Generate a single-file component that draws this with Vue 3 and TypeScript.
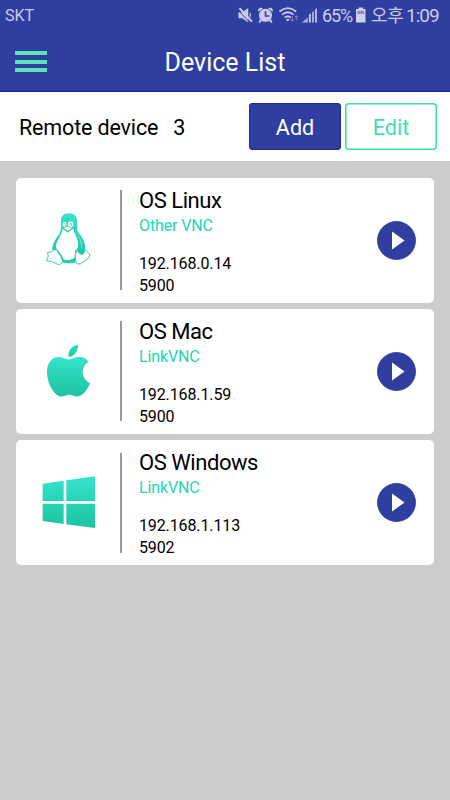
<script setup lang="ts">
interface Device {
  name: string
  kind: string
  ip: string
  port: number
  icon: 'linux' | 'mac' | 'windows'
}

const devices: Device[] = [
  { name: 'OS Linux', kind: 'Other VNC', ip: '192.168.0.14', port: 5900, icon: 'linux' },
  { name: 'OS Mac', kind: 'LinkVNC', ip: '192.168.1.59', port: 5900, icon: 'mac' },
  { name: 'OS Windows', kind: 'LinkVNC', ip: '192.168.1.113', port: 5902, icon: 'windows' },
]
</script>

<template>
  <div class="screen">
    <header class="header">
      <div class="status">
        <span class="carrier">SKT</span>
        <svg class="status-icons" width="82" height="32" viewBox="0 0 82 32">
          <g fill="#c9cbea">
            <path d="M.5 12.300h3.700l6-4.300v14.600l-6-4.300H.5z" />
            <path d="M11.600 12a4.200 4.200 0 0 1 0 6.200z" />
            <path d="M0 10 12 22.800" stroke="#303f9f" stroke-width="1" />
            <path d="M1.500 8.300 14 21.600" stroke="#c9cbea" stroke-width="2" />
            <circle cx="27.500" cy="15.300" r="6.500" />
            <path d="m20.500 11.800-.5-2.400 2.200-1.900 3 .8zM34.500 11.800l.5-2.400-2.200-1.900-3 .8zM22 19l2 2-2 1.700h-1.500zM33 19l-2 2 2 1.700h1.500z" />
            <path d="M63.800 22.500h6v-5z" opacity=".8" />
            <path d="M70.900 22.500h1.900v-9.200l-1.900 1.500zM74.200 22.500h1.500V11l-1.500 1.300zM77.100 22.500h1.700V8l-1.700 1.500z" />
          </g>
          <path d="M27.500 11.300v4.700h4" fill="none" stroke="#303f9f" stroke-width="1.600" />
          <path d="M41.500 11.500q8.300-6.700 16.600 0M44 14.600q5.800-4.700 11.600 0M46.700 17.500q3.100-2.400 6.200 0" fill="none" stroke="#c9cbea" stroke-width="1.700" />
          <path d="m49.800 21.500-1.800-2q1.800-1.400 3.600 0z" fill="#c9cbea" />
          <path d="M54.300 16.500v4.600m-1.700-1.700 1.700 1.800 1.700-1.800M58.400 20v-4.300m-1.700 1.700 1.700-1.800 1.700 1.800" fill="none" stroke="#7f88c5" />
        </svg>
        <span class="percent">65%</span>
        <svg class="battery" width="12" height="32" viewBox="0 0 12 32">
          <path d="M3.500 7.500h4.500v1.500h2.500v13.500H1V9h2.500z" fill="#d0d2ed" />
          <path d="M2.200 10.800h7v3.200h-7z" fill="#8790c9" />
        </svg>
        <span class="ampm">오후</span>
        <span class="clock">1:09</span>
      </div>
      <div class="titlebar">
        <button class="menu" aria-label="Menu"><i></i><i></i><i></i></button>
        <h1>Device List</h1>
      </div>
    </header>

    <section class="toolbar">
      <span class="label">Remote device</span>
      <span class="count">{{ devices.length }}</span>
      <button class="btn add">Add</button>
      <button class="btn edit">Edit</button>
    </section>

    <main class="list">
      <article v-for="d in devices" :key="d.name" class="card">
        <svg class="os" width="104" height="125" viewBox="0 0 104 125">
          <defs>
            <linearGradient :id="'grad-' + d.icon" x1="0" y1="0" x2="0" y2="1">
              <stop offset="0" stop-color="#35e4cd" />
              <stop offset="1" stop-color="#1cc39f" />
            </linearGradient>
          </defs>
          <g v-if="d.icon === 'linux'" transform="translate(19 22) scale(.33333)">
            <path d="M101 40C86 40 77 49 78 65C79 84 78 94 70 106C60 120 52 133 52 149L64 153L83 180Q101 186 120 178L122 158Q129 168 145 162C155 148 151 120 133 102C124 92 127 81 126 62C125 47 116 40 101 40Z" fill="url(#grad-linux)" />
            <path d="M83 87C82 103 67 116 63 137Q61 147 71 153Q81 165 85 178Q101 183 118 175L121 151Q131 148 129 128C127 111 118 103 114 86L99 98Z" fill="#fff" />
            <path d="M55 151Q50 157 37 158L40 168L35 182Q54 184 68 193Q80 195 84 183Q75 160 63 148ZM124 153Q119 166 122 185Q126 195 136 192L162 173L165 165L158 157L151 149L145 162Q133 166 130 153Z" fill="#fff" stroke="#34cfb5" stroke-width="3" />
            <path d="M62 149Q74 158 85 180Q104 185 121 175V188Q101 192 84 188Q80 169 62 149Z" fill="#25cbb0" />
            <ellipse cx="89" cy="73" rx="6" ry="8" fill="#fff" />
            <ellipse cx="107" cy="73" rx="8" ry="9" fill="#fff" />
            <path d="M83 84Q98 75 113 84L99 94Z" fill="#fff" stroke="#25cbb0" stroke-width="2" />
            <path d="m88 71 3 0 0 7M104 72l5-1 1 6" fill="none" stroke="#25cbb0" stroke-width="2.500" />
            <path d="M121 98Q140 114 140 145" fill="none" stroke="#fff" stroke-width="2" opacity=".5" />
          </g>
          <g v-else-if="d.icon === 'mac'" transform="translate(19 25.75) scale(.33333)" fill="url(#grad-mac)">
            <path d="M101 66C98 46 111 33 129 29C131 48 117 65 101 66Z" />
            <path d="M161 82C154 71 143 67 130 67C119 67 111 74 101 74C91 74 83 67 71 67C50 67 36 86 36 110C36 144 55 180 76 185C85 187 92 180 103 180C114 180 119 187 130 185C147 181 159 162 165 145C138 133 136 96 161 82Z" />
          </g>
          <path v-else transform="translate(19 25) scale(.33333)" fill="url(#grad-windows)" d="M23 56 86 47V108H23ZM94 46 180 34V108H94ZM23 116H86V177L23 168ZM94 116H180V189L94 178Z" />
        </svg>
        <div class="rule"></div>
        <div class="info">
          <h2>{{ d.name }}</h2>
          <p class="kind">{{ d.kind }}</p>
          <p>{{ d.ip }}</p>
          <p>{{ d.port }}</p>
        </div>
        <button class="play" aria-label="Connect">
          <svg width="39" height="39" viewBox="0 0 39 39">
            <circle cx="19.500" cy="19.500" r="19" fill="#303f9f" stroke="#2233a0" stroke-width=".8" />
            <path d="M15 10.500 27.500 19.500 15 28.500Z" fill="#fff" />
          </svg>
        </button>
      </article>
    </main>
  </div>
</template>

<style>
body {
  margin: 0;
}
</style>

<style scoped>
.screen {
  width: 450px;
  height: 800px;
  overflow: hidden;
  background: #ccc;
  color: #000;
  font-family: Roboto, "Noto Sans CJK KR", sans-serif;
}
button {
  padding: 0;
  border: 0;
  background: none;
  font: inherit;
}
h1,
h2,
p {
  margin: 0;
  font-weight: 400;
  white-space: nowrap;
}
.header {
  box-sizing: border-box;
  height: 92px;
  background: #303f9f;
  border-bottom: 1px solid #10239a;
}
.status {
  display: flex;
  height: 32px;
  line-height: 32px;
  color: #c9cbea;
  white-space: nowrap;
}
.carrier {
  width: 233px;
  padding-left: 5px;
  font-size: 16px;
}
.status-icons {
  flex: none;
}
.percent {
  width: 33px;
  padding-left: 2px;
  font-size: 18px;
  letter-spacing: -1.100px;
}
.battery {
  flex: none;
}
.ampm {
  width: 34px;
  padding-left: 4px;
  font-size: 18px;
  letter-spacing: -0.300px;
}
.clock {
  padding-left: 1px;
  font-size: 19px;
  letter-spacing: -1px;
}
.titlebar {
  display: grid;
  grid-template-columns: 48px 1fr 48px;
  height: 59px;
  align-items: center;
}
.menu {
  display: flex;
  flex-direction: column;
  gap: 4.500px;
  width: 32px;
  margin: -2px 0 0 15px;
}
.menu i {
  height: 4px;
  background: #5ce6b8;
}
h1 {
  text-align: center;
  color: #fff;
  font-size: 25px;
  line-height: 61px;
}
.toolbar {
  display: flex;
  align-items: center;
  box-sizing: border-box;
  height: 69px;
  padding: 0 13px 0 19px;
  background: #fff;
  font-size: 21.500px;
}
.label,
.count {
  padding-top: 2px;
}
.label {
  letter-spacing: -0.150px;
}
.count {
  margin-left: 15px;
}
.btn {
  box-sizing: border-box;
  width: 92px;
  height: 47px;
  padding-top: 2px;
  border-radius: 4px;
  font-size: 21.500px;
}
.add {
  margin-left: auto;
  background: #303f9f;
  box-shadow: inset 0 0 0 1px #1a2b9a;
  color: #fff;
}
.edit {
  margin-left: 4px;
  background: #fff;
  box-shadow: inset 0 0 0 1.500px #35dfae;
  color: #40dfb2;
}
.list {
  display: flex;
  flex-direction: column;
  gap: 6.250px;
  padding: 16.600px 16px;
}
.card {
  display: flex;
  align-items: center;
  height: 125px;
  border-radius: 5px;
  background: #fff;
}
.os {
  flex: none;
}
.rule {
  width: 2px;
  height: 100px;
  background: #999;
}
.info {
  flex: 1;
  align-self: flex-start;
  padding: 9px 0 0 17px;
  font-size: 16px;
  line-height: 22px;
  letter-spacing: -0.120px;
}
h2 {
  font-size: 22px;
  line-height: 28px;
  letter-spacing: -0.450px;
}
.kind {
  margin-bottom: 16.300px;
  color: #1dd6b5;
}
.play {
  width: 39px;
  height: 39px;
  margin-right: 18px;
}
.play svg {
  display: block;
}
</style>
